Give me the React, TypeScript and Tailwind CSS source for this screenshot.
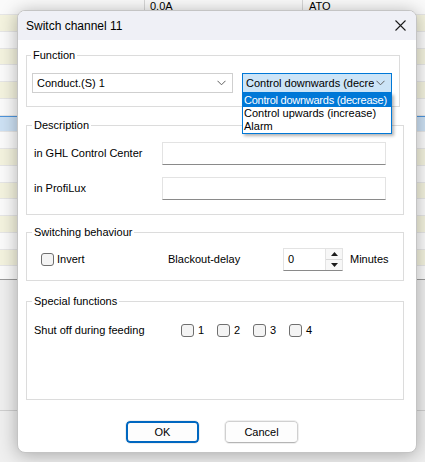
import React from "react";

const font = "font-['Liberation_Sans',Arial,sans-serif]";

function Chevron() {
  return (
    <svg width="9" height="6" viewBox="0 0 9 6" className="shrink-0">
      <path d="M0.5 0.8 L4.5 4.8 L8.5 0.8" fill="none" stroke="#5f5f5f" strokeWidth="1" />
    </svg>
  );
}

function CheckBox({ label }: { label: string }) {
  return (
    <div className="flex items-center gap-[4px]">
      <div className="w-[13px] h-[13px] rounded-[3px] border border-[#6f6f6f] bg-[#f4f4f4]" />
      <span>{label}</span>
    </div>
  );
}

function TextInput({ width, children }: { width: string; children?: React.ReactNode }) {
  return (
    <div
      className={`${width} h-[23px] flex items-center border border-[#e3e3e3] border-b-[#8a8a8a] bg-white`}
    >
      {children}
    </div>
  );
}

function Background() {
  const rows = [
    "bg-[#f4f3df]", "bg-[#fbfbfb]", "bg-[#f4f3df]", "bg-[#fbfbfb]", "bg-[#f4f3df]",
    "bg-[#fbfbfb]", "bg-[#cde1f4] border-t border-t-[#4f95dc]", "bg-[#fbfbfb]", "bg-[#f4f3df]",
    "bg-[#fbfbfb]", "bg-[#f4f3df]", "bg-[#fbfbfb]", "bg-[#f4f3df]", "bg-[#fbfbfb]", "bg-[#f4f3df]",
  ];
  return (
    <div className="flex flex-col">
      <div className="h-[15px] flex bg-[#fafafa] border-b border-[#e6e6e6]">
        <div className="w-[145px] border-r border-[#d6d6d6]" />
        <div className="w-[158px] border-r border-[#d6d6d6] pl-[5px] leading-[13px]">0.0A</div>
        <div className="flex-1 pl-[6px] leading-[13px]">ATO</div>
      </div>
      {rows.map((r, i) => (
        <div key={i} className={`h-[16.75px] border-b border-[#e6e6e6] ${r}`} />
      ))}
      <div className="h-[13.75px] bg-[#fbfbfb] border-b border-[#9a9a9a]" />
      <div className="h-[131px] bg-[#efefef] border-b border-[#cfcfcf]" />
      <div className="h-[50px] bg-[#efefef]" />
    </div>
  );
}

export default function App() {
  return (
    <div className={`relative w-[425px] h-[462px] overflow-hidden bg-[#efefef] text-[11px] text-black ${font}`}>
      <Background />

      {/* Dialog */}
      <div className="absolute left-[17px] top-[10px] w-[400px] h-[443px] rounded-[8px] border border-[#c4c4c4] bg-white shadow-[0_2px_18px_rgba(0,0,0,0.3)] overflow-hidden flex flex-col">
        {/* Title bar */}
        <div className="h-[29px] shrink-0 bg-[#eff0f6] flex items-center justify-between pl-[8px] pr-[10px]">
          <span className="text-[12px]">Switch channel 11</span>
          <svg width="11" height="11" viewBox="0 0 11 11">
            <path d="M0.5 0.5 L10.5 10.5 M10.5 0.5 L0.5 10.5" stroke="#1b1b1b" strokeWidth="1.1" />
          </svg>
        </div>

        <div className="flex flex-col pl-[8px]">
          {/* Function */}
          <fieldset className="mt-[7px] w-[374px] border border-[#dcdcdc] pb-[13px]">
            <legend className="ml-[4px] px-[2px] leading-[16px]">Function</legend>
            <div className="mt-[10px] pl-[5px] flex gap-[9px]">
              <div className="w-[201px] h-[20px] border border-[#cfcfcf] bg-white flex items-center justify-between pl-[4px] pr-[6px]">
                <span>Conduct.(S) 1</span>
                <Chevron />
              </div>
              <div className="relative">
                <div className="w-[150px] h-[20px] border border-[#0078d7] bg-[#cce4f7] flex items-center justify-between pl-[3px] pr-[6px]">
                  <span className="whitespace-nowrap overflow-hidden w-[128px]">Control downwards (decre</span>
                  <Chevron />
                </div>
                <div className="absolute left-0 top-[20px] z-10 w-[150px] border border-[#0078d7] bg-white shadow-[2px_2px_3px_rgba(0,0,0,0.3)] flex flex-col">
                  <div className="h-[13px] leading-[13px] pl-[1px] bg-[#0078d7] text-white whitespace-nowrap tracking-[-0.25px]">
                    Control downwards (decrease)
                  </div>
                  <div className="h-[13px] leading-[13px] pl-[1px] whitespace-nowrap">Control upwards (increase)</div>
                  <div className="h-[13px] leading-[13px] pl-[1px]">Alarm</div>
                </div>
              </div>
            </div>
          </fieldset>

          {/* Description */}
          <fieldset className="mt-[10px] w-[378px] border border-[#dcdcdc] pb-[14px]">
            <legend className="ml-[5px] px-[2px] leading-[16px]">Description</legend>
            <div className="mt-[9px] pl-[7px] flex flex-col gap-[12px]">
              <div className="flex items-center">
                <span className="w-[128px]">in GHL Control Center</span>
                <TextInput width="w-[224px]" />
              </div>
              <div className="flex items-center">
                <span className="w-[128px]">in ProfiLux</span>
                <TextInput width="w-[224px]" />
              </div>
            </div>
          </fieldset>

          {/* Switching behaviour */}
          <fieldset className="mt-[9px] w-[378px] border border-[#dcdcdc] pb-[9px]">
            <legend className="ml-[5px] px-[2px] leading-[16px]">Switching behaviour</legend>
            <div className="mt-[8px] pl-[14px] flex items-center">
              <div className="w-[127px] flex items-center gap-[3px]">
                <div className="w-[13px] h-[13px] rounded-[3px] border border-[#6f6f6f] bg-[#f4f4f4]" />
                <span>Invert</span>
              </div>
              <span className="w-[115px]">Blackout-delay</span>
              <div className="w-[60px] h-[23px] flex border border-[#e3e3e3] border-b-[#8a8a8a] bg-white">
                <span className="flex-1 pl-[4px] leading-[21px]">0</span>
                <div className="w-[17px] flex flex-col border-l border-[#e3e3e3]">
                  <div className="flex-1 flex items-center justify-center border-b border-[#d8d8d8] bg-[#f7f7f7]">
                    <svg width="7" height="4" viewBox="0 0 7 4">
                      <path d="M0 4 L3.5 0 L7 4 Z" fill="#1a1a1a" />
                    </svg>
                  </div>
                  <div className="flex-1 flex items-center justify-center bg-[#f7f7f7]">
                    <svg width="7" height="4" viewBox="0 0 7 4">
                      <path d="M0 0 L3.5 4 L7 0 Z" fill="#1a1a1a" />
                    </svg>
                  </div>
                </div>
              </div>
              <span className="ml-[7px]">Minutes</span>
            </div>
          </fieldset>

          {/* Special functions */}
          <fieldset className="mt-[12px] w-[378px] border border-[#dcdcdc] pb-[61px]">
            <legend className="ml-[5px] px-[2px] leading-[16px]">Special functions</legend>
            <div className="mt-[13px] pl-[7px] h-[16px] flex items-center">
              <span className="w-[147px]">Shut off during feeding</span>
              {["1", "2", "3", "4"].map((n) => (
                <div key={n} className="w-[36px]">
                  <CheckBox label={n} />
                </div>
              ))}
            </div>
          </fieldset>

          {/* Buttons */}
          <div className="mt-[21px] pl-[100px] flex gap-[26px]">
            <button className="w-[73px] h-[22px] rounded-[4px] border-2 border-[#0067c0] bg-[#fdfdfd] outline outline-1 outline-[#efefef]">
              OK
            </button>
            <button className="w-[73px] h-[22px] rounded-[4px] border border-[#d0d0d0] border-b-[#b5b5b5] bg-[#fdfdfd] outline outline-1 outline-[#efefef]">
              Cancel
            </button>
          </div>
        </div>
      </div>
    </div>
  );
}
